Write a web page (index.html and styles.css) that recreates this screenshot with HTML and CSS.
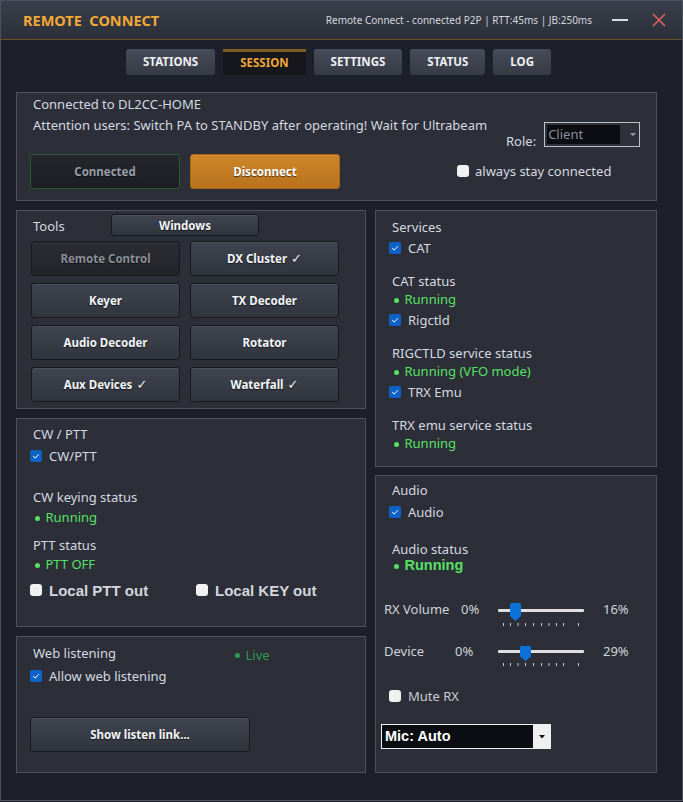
FILE: index.html
```html
<!DOCTYPE html>
<html>
<head>
<meta charset="utf-8">
<title>Remote Connect</title>
<link rel="stylesheet" href="styles.css">
</head>
<body>
<div class="window">
  <header class="titlebar">
    <div class="app-title">REMOTE&nbsp; CONNECT</div>
    <div class="conn-info">Remote Connect - connected P2P | RTT:45ms | JB:250ms</div>
    <div class="win-btn win-min"><svg width="16" height="2" viewBox="0 0 16 2"><rect width="16" height="2" fill="#d9dce2"/></svg></div>
    <div class="win-btn win-close"><svg width="14" height="14" viewBox="0 0 14 14"><path d="M1 1L13 13M13 1L1 13" stroke="#e0655c" stroke-width="1.5" fill="none"/></svg></div>
  </header>

  <nav class="tabs">
    <div class="tab">STATIONS</div>
    <div class="tab active">SESSION</div>
    <div class="tab">SETTINGS</div>
    <div class="tab">STATUS</div>
    <div class="tab">LOG</div>
  </nav>

  <main class="content">
    <section class="panel conn">
      <div class="conn-main">
        <div class="conn-text">Connected to DL2CC-HOME</div>
        <div class="conn-text">Attention users: Switch PA to STANDBY after operating! Wait for Ultrabeam</div>
        <div class="conn-buttons">
          <div class="btn btn-connected">Connected</div>
          <div class="btn btn-disconnect">Disconnect</div>
        </div>
      </div>
      <div class="conn-side">
        <div class="role-row">
          <span class="role-label">Role:</span>
          <div class="role-combo">
            <span class="role-value">Client</span>
            <span class="role-arrow"><svg width="6" height="4" viewBox="0 0 6 4"><path d="M0 0H6L3 3.5Z" fill="#8e929a"/></svg></span>
          </div>
        </div>
        <div class="check-row stay-row"><span class="cb"></span>always stay connected</div>
      </div>
    </section>

    <div class="columns">
      <div class="col">
        <section class="panel tools">
          <div class="tools-head">
            <span class="tools-title">Tools</span>
            <div class="btn btn-windows">Windows</div>
          </div>
          <div class="tool-grid">
            <div class="btn btn-tool disabled">Remote Control</div>
            <div class="btn btn-tool">DX Cluster <span class="tick">✓</span></div>
            <div class="btn btn-tool">Keyer</div>
            <div class="btn btn-tool">TX Decoder</div>
            <div class="btn btn-tool">Audio Decoder</div>
            <div class="btn btn-tool">Rotator</div>
            <div class="btn btn-tool">Aux Devices <span class="tick">✓</span></div>
            <div class="btn btn-tool">Waterfall <span class="tick">✓</span></div>
          </div>
        </section>

        <section class="panel cw">
          <div class="lbl">CW / PTT</div>
          <div class="check-row cw-check"><span class="cb on"><svg width="12" height="12" viewBox="0 0 12 12"><path d="M3.2 6.2L5.2 8.1L8.8 4.3" stroke="#fff" stroke-width="1" fill="none"/></svg></span>CW/PTT</div>
          <div class="lbl cw-keying">CW keying status</div>
          <div class="status cw-run"><span class="dot"></span>Running</div>
          <div class="lbl cw-ptt">PTT status</div>
          <div class="status cw-pttoff"><span class="dot"></span>PTT OFF</div>
          <div class="local-row">
            <div class="check-row local"><span class="cb"></span>Local PTT out</div>
            <div class="check-row local"><span class="cb"></span>Local KEY out</div>
          </div>
        </section>

        <section class="panel web">
          <div class="web-head">
            <span class="web-title">Web listening</span>
            <span class="live"><span class="dot live-dot"></span>Live</span>
          </div>
          <div class="check-row web-check"><span class="cb on"><svg width="12" height="12" viewBox="0 0 12 12"><path d="M3.2 6.2L5.2 8.1L8.8 4.3" stroke="#fff" stroke-width="1" fill="none"/></svg></span>Allow web listening</div>
          <div class="btn btn-link">Show listen link...</div>
        </section>
      </div>

      <div class="col">
        <section class="panel services">
          <div class="lbl">Services</div>
          <div class="check-row svc-check"><span class="cb on"><svg width="12" height="12" viewBox="0 0 12 12"><path d="M3.2 6.2L5.2 8.1L8.8 4.3" stroke="#fff" stroke-width="1" fill="none"/></svg></span>CAT</div>
          <div class="lbl svc-sub">CAT status</div>
          <div class="status"><span class="dot"></span>Running</div>
          <div class="check-row svc-check"><span class="cb on"><svg width="12" height="12" viewBox="0 0 12 12"><path d="M3.2 6.2L5.2 8.1L8.8 4.3" stroke="#fff" stroke-width="1" fill="none"/></svg></span>Rigctld</div>
          <div class="lbl svc-sub">RIGCTLD service status</div>
          <div class="status"><span class="dot"></span>Running (VFO mode)</div>
          <div class="check-row svc-check"><span class="cb on"><svg width="12" height="12" viewBox="0 0 12 12"><path d="M3.2 6.2L5.2 8.1L8.8 4.3" stroke="#fff" stroke-width="1" fill="none"/></svg></span>TRX Emu</div>
          <div class="lbl svc-sub">TRX emu service status</div>
          <div class="status"><span class="dot"></span>Running</div>
        </section>

        <section class="panel audio">
          <div class="lbl">Audio</div>
          <div class="check-row audio-check"><span class="cb on"><svg width="12" height="12" viewBox="0 0 12 12"><path d="M3.2 6.2L5.2 8.1L8.8 4.3" stroke="#fff" stroke-width="1" fill="none"/></svg></span>Audio</div>
          <div class="lbl audio-sub">Audio status</div>
          <div class="status big"><span class="dot"></span>Running</div>

          <div class="slider-row rx">
            <span class="sl-label">RX Volume</span>
            <span class="sl-min">0%</span>
            <div class="slider">
              <div class="track"></div>
              <svg class="ticks" width="86" height="3" viewBox="0 0 86 3"><g stroke="#c6c9cf" stroke-width="1"><path d="M5.5 0V3M12.5 0V3M20 0V3M27.5 0V3M35.5 0V3M43.5 0V3M51 0V3M58.5 0V3M65.5 0V3M80.5 0V3"/></g></svg>
              <span class="handle" style="left:12px"><svg width="11" height="18" viewBox="0 0 11 18"><path d="M1.5 0H9.5Q11 0 11 1.5V13L5.5 18L0 13V1.5Q0 0 1.5 0Z" fill="#0b72d9"/></svg></span>
            </div>
            <span class="sl-max">16%</span>
          </div>

          <div class="slider-row dev">
            <span class="sl-label">Device</span>
            <span class="sl-min">0%</span>
            <div class="slider sm">
              <div class="track"></div>
              <svg class="ticks" width="86" height="3" viewBox="0 0 86 3"><g stroke="#c6c9cf" stroke-width="1"><path d="M5.5 0V3M12.5 0V3M20 0V3M27.5 0V3M35.5 0V3M43.5 0V3M51 0V3M58.5 0V3M65.5 0V3M80.5 0V3"/></g></svg>
              <span class="handle" style="left:22px"><svg width="11" height="15" viewBox="0 0 11 15"><path d="M1.5 0H9.5Q11 0 11 1.5V10.5L5.5 15L0 10.5V1.5Q0 0 1.5 0Z" fill="#0b72d9"/></svg></span>
            </div>
            <span class="sl-max">29%</span>
          </div>

          <div class="check-row mute"><span class="cb"></span>Mute RX</div>

          <div class="mic-combo">
            <span class="mic-value">Mic: Auto</span>
            <span class="mic-arrow"><svg width="6" height="4" viewBox="0 0 6 4"><path d="M0 0H6L3 3.5Z" fill="#111"/></svg></span>
          </div>
        </section>
      </div>
    </div>
  </main>
</div>
</body>
</html>
```

FILE: styles.css
```css
* { box-sizing: border-box; }
html, body { margin: 0; padding: 0; }
body {
  width: 683px;
  height: 802px;
  overflow: hidden;
  background: #1d2029;
  font-family: "Noto Sans", "Open Sans", sans-serif;
  font-size: 13px;
  color: #d5d9e0;
}
.window {
  width: 683px;
  height: 801px;
  border: 1px solid #4d515d;
  background: #1d2029;
  display: flex;
  flex-direction: column;
}

/* title bar */
.titlebar {
  height: 39px;
  flex: none;
  display: flex;
  align-items: center;
  padding: 0 16px 0 22px;
  background: linear-gradient(#3b3f4b, #2b2f39);
  border-bottom: 1px solid #6a5327;
}
.app-title {
  color: #f3a935;
  font-weight: 700;
  font-size: 14.5px;
  white-space: nowrap;
}
.conn-info {
  margin-left: auto;
  font-size: 10px;
  color: #d3d7de;
  white-space: nowrap;
}
.win-btn { display: flex; align-items: center; }
.win-min { margin-left: 20px; }
.win-close { margin-left: 24px; }

/* tabs */
.tabs {
  display: flex;
  gap: 8px;
  padding: 9px 0 0 125px;
  flex: none;
}
.tab {
  height: 26px;
  line-height: 26px;
  padding: 0 17px;
  border-radius: 3px;
  background: linear-gradient(#474c58, #363a45);
  font-weight: 700;
  font-size: 11.5px;
  color: #eef0f4;
}
.tab.active {
  background: #15171c;
  color: #f2a63a;
  border-top: 3px solid #7b5c24;
  line-height: 21px;
  border-radius: 0 0 3px 3px;
}

/* content */
.content {
  padding: 17px 25px 0 15px;
  display: flex;
  flex-direction: column;
  gap: 9px;
}
.panel {
  background: #2c2f38;
  border: 1px solid #4e525d;
}

/* generic pieces */
.btn {
  display: flex;
  align-items: center;
  justify-content: center;
  font-weight: 700;
  font-size: 11.5px;
  color: #f2f4f7;
  background: linear-gradient(#40444f, #30343d);
  border: 1px solid #17191e;
  border-radius: 3px;
  box-shadow: inset 0 1px 0 rgba(255, 255, 255, 0.07);
  text-shadow: 0 1px 1px rgba(0, 0, 0, 0.6);
  white-space: nowrap;
}
.tick {
  font-family: "DejaVu Sans", sans-serif;
  font-size: 13px;
  font-weight: 700;
  margin-left: 4px;
}
.lbl {
  height: 18px;
  line-height: 18px;
  white-space: nowrap;
}
.status {
  height: 18px;
  line-height: 18px;
  color: #58e065;
  display: flex;
  align-items: center;
  white-space: nowrap;
}
.dot {
  display: inline-block;
  width: 5px;
  height: 5px;
  border-radius: 50%;
  background: currentColor;
  margin: 2px 6px 0 1.5px;
}
.check-row {
  display: flex;
  align-items: center;
  gap: 7px;
  height: 22px;
  margin-left: -3px;
  white-space: nowrap;
}
.cb {
  width: 12px;
  height: 12px;
  flex: none;
  border-radius: 3px;
  background: #f1f1f1;
  display: flex;
}
.cb.on {
  background: #0e62c6;
  border-radius: 2px;
}

/* connection panel */
.conn {
  height: 109px;
  display: flex;
}
.conn-main {
  width: 440px;
  flex: none;
  padding: 1px 0 0 13px;
}
.conn-text {
  margin-left: 3px;
  line-height: 21px;
  white-space: nowrap;
}
.conn-buttons {
  display: flex;
  gap: 10px;
  margin-top: 18px;
}
.btn-connected, .btn-disconnect {
  width: 150px;
  height: 35px;
}
.btn-connected {
  background: linear-gradient(#25272d, #1c1e23);
  border-color: #285a33;
  color: #9a9ea7;
  box-shadow: none;
}
.btn-disconnect {
  background: linear-gradient(#cf8629, #b8721e);
  border-color: #a5661b;
  color: #ffffff;
}
.conn-side {
  padding-top: 29px;
}
.role-row {
  display: flex;
  align-items: flex-end;
  gap: 8px;
  margin-left: 49px;
}
.role-label {
  line-height: 14px;
  margin-bottom: -1px;
}
.role-combo {
  width: 96px;
  height: 25px;
  border: 1px solid #bcc0c7;
  background: #2e3139;
  display: flex;
  align-items: center;
  padding: 0 0 0 2px;
}
.role-value {
  width: 73px;
  height: 19px;
  line-height: 19px;
  background: #0b0d12;
  color: #8c9098;
  padding-left: 1px;
}
.role-arrow {
  margin-left: 10px;
  display: flex;
}
.stay-row {
  margin-left: 0;
  margin-top: 13px;
  gap: 6px;
}

/* columns */
.columns {
  display: flex;
  gap: 9px;
}
.col {
  display: flex;
  flex-direction: column;
  gap: 9px;
}
.col:first-child { width: 350px; }
.col:last-child { width: 282px; gap: 8px; }

/* tools */
.tools {
  height: 199px;
  padding: 3px 0 0 14px;
}
.tools-head {
  display: flex;
  align-items: center;
  height: 22px;
}
.tools-title {
  width: 80px;
  padding: 2px 0 0 2px;
}
.btn-windows {
  width: 148px;
  height: 22px;
}
.tool-grid {
  display: grid;
  grid-template-columns: 149px 149px;
  column-gap: 10px;
  row-gap: 7px;
  margin-top: 5px;
}
.btn-tool { height: 35px; }
.btn-tool.disabled {
  background: linear-gradient(#2b2d33, #222429);
  color: #8b8f98;
  box-shadow: none;
}

/* cw / ptt */
.cw {
  height: 209px;
  padding: 6px 0 0 16px;
}
.cw-check { margin-top: 2px; }
.cw-keying { margin-top: 21px; }
.cw-run { margin-top: 2px; }
.cw-ptt { margin-top: 10px; }
.cw-pttoff { margin-top: 1px; }
.local-row {
  display: grid;
  grid-template-columns: 166px auto;
  margin-top: 6px;
}
.check-row.local {
  font-family: "Liberation Sans", Arial, sans-serif;
  font-weight: 700;
  font-size: 15px;
  color: #d3d6dc;
}

/* web listening */
.web {
  height: 137px;
  padding: 7px 0 0 16px;
}
.web-head {
  display: flex;
  height: 18px;
  line-height: 18px;
}
.web-title { width: 200px; }
.live {
  color: #2f9b4f;
  display: flex;
  align-items: center;
  padding-top: 3px;
}
.web-check { margin-top: 3px; }
.btn-link {
  width: 220px;
  height: 35px;
  margin: 30px 0 0 -3px;
}

/* services */
.services {
  height: 257px;
  padding: 7px 0 0 16px;
}
.svc-check { margin-top: 1px; }
.svc-sub { margin-top: 13px; }

/* audio */
.audio {
  height: 298px;
  padding: 5px 0 0 16px;
}
.audio-check { margin-top: 2px; }
.audio-sub { margin-top: 17px; }
.status.big {
  margin-top: -2px;
  font-family: "Liberation Sans", Arial, sans-serif;
  font-weight: 700;
  font-size: 14.5px;
}
.slider-row {
  display: flex;
  align-items: flex-start;
  height: 27px;
  margin-left: -8px;
  line-height: 18px;
  color: #cfd3da;
  white-space: nowrap;
}
.slider-row.rx { margin-top: 26px; }
.slider-row.dev { margin-top: 15px; }
.rx .sl-label { width: 77px; }
.rx .sl-min { width: 37px; }
.dev .sl-label { width: 71px; }
.dev .sl-min { width: 43px; }
.sl-max { margin-left: 19px; }
.slider {
  position: relative;
  width: 86px;
  height: 23px;
  margin-top: 3px;
}
.slider.sm { margin-top: 4px; }
.track {
  height: 3px;
  margin-top: 6px;
  background: #e0e0e2;
  border-radius: 1px;
}
.slider.sm .track { margin-top: 4px; }
.ticks {
  display: block;
  margin-top: 11px;
}
.slider.sm .ticks { margin-top: 10px; }
.handle {
  position: absolute;
  top: 0;
  display: flex;
}
.check-row.mute {
  margin-top: 16px;
  color: #c8ccd3;
}
.mic-combo {
  width: 170px;
  height: 25px;
  margin: 17px 0 0 -11px;
  border: 1px solid #f0f0f0;
  background: #0a0d12;
  display: flex;
  align-items: stretch;
}
.mic-value {
  flex: 1;
  padding-left: 3px;
  font-family: "Liberation Sans", Arial, sans-serif;
  font-weight: 700;
  font-size: 14.5px;
  line-height: 23px;
  color: #ffffff;
}
.mic-arrow {
  width: 17px;
  background: #efefef;
  display: flex;
  align-items: center;
  justify-content: center;
}
```
